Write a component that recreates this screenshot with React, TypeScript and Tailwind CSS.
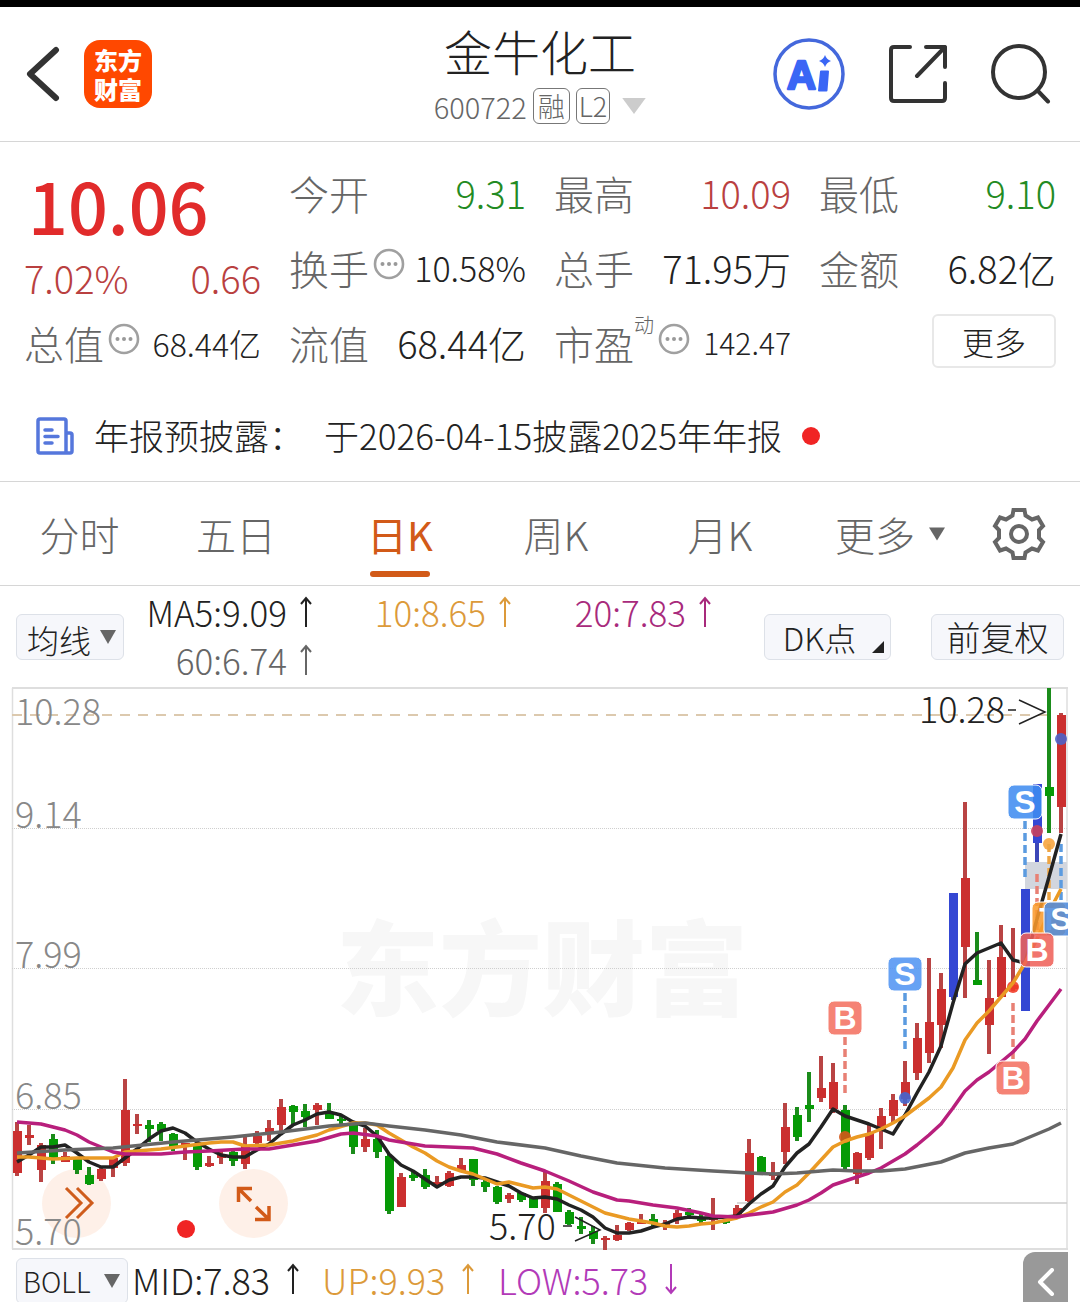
import type { ReactNode } from "react";

type Candle = [number, number, number, number, string];

// high, body top, body bottom, low, direction (r = up, g = down, b = signal)
const candles: Candle[] = [
  [1122, 1131, 1173, 1176, "r"], [1125, 1135, 1138, 1145, "r"], [1143, 1145, 1170, 1182, "r"], [1134, 1139, 1160, 1164, "g"],
  [1152, 1156, 1162, 1162, "r"], [1158, 1159, 1170, 1174, "g"], [1167, 1175, 1184, 1185, "g"], [1168, 1169, 1179, 1181, "r"],
  [1157, 1158, 1168, 1177, "r"], [1079, 1110, 1163, 1166, "r"], [1114, 1124, 1126, 1134, "r"], [1120, 1125, 1129, 1142, "g"],
  [1122, 1124, 1131, 1141, "g"], [1133, 1134, 1147, 1151, "g"], [1143, 1143, 1146, 1160, "r"], [1144, 1146, 1167, 1170, "g"],
  [1156, 1163, 1166, 1167, "r"], [1152, 1154, 1158, 1164, "r"], [1150, 1152, 1161, 1166, "g"], [1137, 1145, 1164, 1169, "r"],
  [1131, 1136, 1143, 1145, "r"], [1120, 1128, 1133, 1141, "r"], [1099, 1107, 1125, 1131, "r"], [1105, 1106, 1112, 1124, "g"],
  [1104, 1111, 1117, 1127, "g"], [1103, 1105, 1110, 1125, "r"], [1103, 1113, 1119, 1119, "g"], [1115, 1119, 1121, 1124, "g"],
  [1122, 1123, 1147, 1154, "g"], [1128, 1139, 1147, 1152, "r"], [1130, 1139, 1152, 1158, "g"], [1154, 1156, 1211, 1214, "g"],
  [1173, 1177, 1207, 1207, "r"], [1172, 1175, 1178, 1181, "g"], [1169, 1175, 1187, 1189, "g"], [1176, 1182, 1185, 1187, "r"],
  [1171, 1173, 1186, 1187, "r"], [1158, 1165, 1171, 1171, "r"], [1159, 1159, 1180, 1186, "g"], [1180, 1182, 1187, 1192, "g"],
  [1186, 1187, 1202, 1204, "g"], [1193, 1195, 1199, 1203, "r"], [1192, 1193, 1200, 1202, "g"], [1197, 1198, 1208, 1208, "g"],
  [1171, 1181, 1208, 1213, "r"], [1182, 1184, 1212, 1212, "g"], [1210, 1212, 1224, 1225, "g"], [1217, 1226, 1229, 1234, "g"],
  [1226, 1231, 1239, 1244, "g"], [1236, 1238, 1240, 1250, "r"], [1225, 1235, 1240, 1241, "r"], [1222, 1223, 1230, 1231, "r"],
  [1214, 1221, 1224, 1224, "r"], [1214, 1219, 1224, 1226, "g"], [1220, 1223, 1226, 1230, "r"], [1210, 1213, 1220, 1224, "r"],
  [1208, 1212, 1215, 1218, "g"], [1214, 1218, 1221, 1223, "g"], [1198, 1217, 1220, 1230, "r"], [1219, 1220, 1223, 1224, "g"],
  [1205, 1208, 1217, 1217, "r"], [1139, 1153, 1201, 1202, "r"], [1156, 1157, 1174, 1175, "g"], [1162, 1174, 1176, 1180, "r"],
  [1103, 1127, 1152, 1164, "r"], [1107, 1115, 1137, 1141, "g"], [1072, 1105, 1109, 1122, "g"], [1056, 1088, 1098, 1102, "r"],
  [1063, 1082, 1109, 1113, "r"], [1105, 1110, 1167, 1169, "g"], [1152, 1153, 1174, 1184, "r"], [1125, 1133, 1158, 1160, "r"],
  [1108, 1116, 1130, 1149, "r"], [1094, 1100, 1116, 1123, "r"], [1061, 1082, 1099, 1106, "r"], [1023, 1038, 1073, 1080, "r"],
  [958, 1022, 1053, 1063, "r"], [973, 989, 1025, 1048, "r"], [893, 893, 997, 1000, "b"], [802, 878, 947, 998, "r"],
  [932, 980, 985, 985, "g"], [960, 998, 1025, 1054, "r"], [925, 957, 997, 997, "r"], [928, 985, 989, 991, "r"],
  [889, 889, 1011, 1011, "b"], [784, 784, 843, 862, "b"], [688, 787, 796, 833, "g"], [713, 715, 807, 833, "r"],
];

const bodyColor: Record<string, string> = { r: "#cb2f2f", g: "#069a06", b: "#3447d3" };
const wickColor: Record<string, string> = { r: "#b94444", g: "#1b8c1b", b: "#3c47b8" };

// [candle index, y]
const ma5 = [
  1162, 1155, 1147, 1147, 1145, 1153, 1162, 1167, 1167, 1158, 1149, 1139, 1131, 1128, 1133, 1142, 1149, 1155, 1157, 1157, 1150, 1144,
  1134, 1125, 1120, 1114, 1112, 1115, 1122, 1126, 1136, 1154, 1165, 1171, 1179, 1187, 1180, 1177, 1177, 1178, 1182, 1186, 1193, 1198,
  1197, 1199, 1205, 1210, 1217, 1228, 1233, 1233, 1231, 1227, 1224, 1219, 1217, 1218, 1218, 1217, 1216, 1204, 1194, 1186, 1167, 1153,
  1144, 1127, 1109, 1116, 1120, 1124, 1129, 1134, 1115, 1093, 1072, 1046, 1003, 964, 953, 948, 943, 960, 963, 919, 877, 834,
].map((y, i) => [i, y]);

const ma10 = [
  [0, 1157], [1, 1157], [3, 1159], [5, 1158], [8, 1158], [9, 1152], [12, 1149], [14, 1146], [16, 1143], [17, 1142], [18, 1142],
  [19, 1146], [21, 1145], [23, 1141], [25, 1135], [26, 1130], [28, 1123], [29, 1123], [30, 1125], [31, 1133], [32, 1140], [33, 1147],
  [34, 1153], [35, 1161], [36, 1167], [37, 1171], [38, 1174], [39, 1179], [40, 1184], [41, 1182], [42, 1185], [43, 1188], [44, 1187],
  [45, 1189], [46, 1195], [47, 1201], [48, 1207], [49, 1213], [50, 1216], [51, 1219], [52, 1221], [53, 1223], [54, 1226], [55, 1227],
  [56, 1226], [57, 1224], [58, 1223], [60, 1218], [61, 1213], [62, 1207], [63, 1202], [64, 1192], [65, 1185], [66, 1173], [67, 1160],
  [68, 1147], [69, 1141], [70, 1137], [71, 1134], [72, 1129], [73, 1123], [74, 1116], [75, 1107], [76, 1098], [77, 1087], [78, 1068],
  [79, 1040], [80, 1023], [81, 1011], [82, 997], [83, 983], [84, 963], [85, 939], [86, 912], [87, 889],
];

const ma20 = [
  [0, 1122], [1, 1123], [2, 1124], [3, 1127], [4, 1130], [5, 1135], [6, 1142], [7, 1147], [8, 1152], [9, 1154], [12, 1154], [14, 1152],
  [16, 1151], [19, 1149], [21, 1149], [23, 1145], [25, 1141], [27, 1134], [28, 1133], [30, 1136], [31, 1140], [32, 1142], [34, 1146],
  [38, 1148], [40, 1154], [42, 1163], [43, 1167], [44, 1171], [46, 1181], [48, 1192], [50, 1200], [51, 1201], [53, 1205], [55, 1208],
  [57, 1213], [58, 1216], [60, 1217], [61, 1215], [63, 1212], [65, 1205], [66, 1200], [67, 1193], [68, 1185], [70, 1177], [71, 1173],
  [72, 1168], [74, 1154], [75, 1145], [76, 1135], [77, 1124], [78, 1108], [79, 1091], [80, 1080], [81, 1072], [82, 1062], [83, 1052],
  [84, 1039], [85, 1021], [86, 1005], [87, 989],
];

const ma60 = [
  [0, 1153], [4, 1150], [8, 1148], [13, 1142], [18, 1137], [22, 1132], [26, 1126], [28, 1124], [29, 1123], [31, 1126], [34, 1130],
  [37, 1135], [40, 1142], [44, 1148], [47, 1156], [50, 1163], [54, 1168], [58, 1171], [61, 1173], [63, 1174], [65, 1173], [68, 1170],
  [70, 1171], [72, 1171], [74, 1169], [77, 1162], [79, 1153], [81, 1148], [83, 1144], [84, 1139], [86, 1129], [87, 1123],
];

const candleX = (i: number) => 17 + i * 12;
const toPoints = (line: number[][]) => line.map(([i, y]) => `${candleX(i)},${y}`).join(" ");

const priceLabels = [
  { text: "10.28", y: 725 },
  { text: "9.14", y: 828 },
  { text: "7.99", y: 968 },
  { text: "6.85", y: 1109 },
  { text: "5.70", y: 1245 },
];

const markers = [
  { x: 845, y: 1018, text: "B", color: "#f47060" },
  { x: 905, y: 974, text: "S", color: "#5094f2" },
  { x: 1013, y: 1078, text: "B", color: "#f47060" },
  { x: 1025, y: 802, text: "S", color: "#3f8cf0" },
  { x: 1049, y: 919, text: "T", color: "#f99a2c" },
  { x: 1061, y: 919, text: "S", color: "#4f8bdc" },
  { x: 1037, y: 950, text: "B", color: "#ef6058" },
];

const leaders = [
  { x: 845, from: 1037, to: 1093, color: "#e88074" },
  { x: 905, from: 993, to: 1049, color: "#5b9be0" },
  { x: 1013, from: 1003, to: 1060, color: "#e88074" },
  { x: 1025, from: 821, to: 877, color: "#5b9be0" },
  { x: 1037, from: 874, to: 934, color: "#e88074" },
  { x: 1049, from: 844, to: 902, color: "#eea544" },
  { x: 1061, from: 844, to: 902, color: "#5b9be0" },
];

const dots = [
  { x: 845, y: 1137, color: "#d4581a" },
  { x: 905, y: 1098, color: "#4466cf" },
  { x: 1013, y: 987, color: "#f23c28" },
  { x: 1037, y: 831, color: "#c9405c" },
  { x: 1049, y: 844, color: "#f7a540" },
  { x: 1061, y: 739, color: "#4d63c9" },
];

function InfoIcon() {
  return (
    <svg viewBox="0 0 32 32" className="mb-2 ml-1 size-8 shrink-0" aria-hidden="true">
      <circle cx="16" cy="16" r="14" fill="none" stroke="#a0a0a0" strokeWidth="2.6" />
      <circle cx="9.5" cy="16" r="2" fill="#999" />
      <circle cx="16" cy="16" r="2" fill="#999" />
      <circle cx="22.5" cy="16" r="2" fill="#999" />
    </svg>
  );
}

function Arrow({ down = false }: { down?: boolean }) {
  return (
    <svg viewBox="0 0 14 32" className="h-8 w-3.5" fill="none" stroke="currentColor" strokeWidth="2" aria-hidden="true">
      {down ? <path d="M7 1v29M2 24l5 6 5-6" /> : <path d="M7 31V2M2 8l5-6 5 6" />}
    </svg>
  );
}

function Quote({ label, info, sup, value, valueClass }: { label: string; info?: boolean; sup?: string; value: string; valueClass: string }) {
  return (
    <div className="flex items-center justify-between whitespace-nowrap">
      <dt className="flex items-center text-[40px] text-[#666]">
        {label}
        {sup && <sup className="top-0 self-start text-xl leading-6">{sup}</sup>}
        {info && <InfoIcon />}
      </dt>
      <dd className={valueClass}>{value}</dd>
    </div>
  );
}

function Average({ text, className, down }: { text: string; className: string; down?: boolean }) {
  return (
    <div className={`flex items-center whitespace-nowrap ${className}`}>
      {text}
      <Arrow down={down} />
    </div>
  );
}

function Picker({ label, value, options, className }: { label: string; value: string; options: string[]; className: string }) {
  return (
    <div className={`relative shrink-0 ${className}`}>
      <select
        aria-label={label}
        defaultValue={value}
        className="h-[46px] w-full appearance-none rounded-md border border-[#dde1e8] bg-[#f6f7fb] text-[#222] outline-none"
      >
        {options.map((o) => (
          <option key={o}>{o}</option>
        ))}
      </select>
      <svg viewBox="0 0 16 14" className="pointer-events-none absolute right-2 top-4 h-3.5 w-4" aria-hidden="true">
        <path d="M0 0h16L8 14z" fill="#666" />
      </svg>
    </div>
  );
}

function Tab({ active, children }: { active?: boolean; children: ReactNode }) {
  return (
    <button
      role="tab"
      aria-selected={!!active}
      className={`relative flex h-full items-center justify-center gap-3.5 whitespace-nowrap text-[40px] ${active ? "font-normal text-[#d25a18]" : "text-[#666]"}`}
    >
      {children}
      {active && <span className="absolute bottom-2 h-1.5 w-[60px] rounded-full bg-[#d25a18]" />}
    </button>
  );
}

function KLineChart() {
  return (
    <svg viewBox="0 686 1080 564" className="pointer-events-none block w-full" role="img" aria-label="日K">
      <text x="542" y="1008" textAnchor="middle" fontSize="103" fontWeight="900" fill="#f7f7f7">东方财富</text>
      <path d="M12 688H1068M12 1249H1068" stroke="#dedede" strokeWidth="2" />
      <path d="M12.5 688V1249M1067 688V1249" stroke="#dedede" strokeWidth="1.5" />
      <path d="M12 828.5H1067M12 968.5H1067M12 1109.5H1067" stroke="#cfcfcf" strokeDasharray="1 1" />
      <path d="M12 715H1047" stroke="#dcc9ae" strokeWidth="2" strokeDasharray="10 8" />
      <path d="M737 1203H1067" stroke="#ccc" strokeWidth="1.5" />
      <rect x="1025" y="862" width="42" height="27" fill="#d2d6de" />

      <g fontSize="36" fill="#888">
        {priceLabels.map((p) => (
          <text key={p.text} x="15" y={p.y}>{p.text}</text>
        ))}
      </g>

      {candles.map(([high, top, bottom, low, dir], i) => (
        <g key={i}>
          <rect x={candleX(i) - 2} y={high} width="4" height={Math.max(low - high, 1)} fill={wickColor[dir]} />
          <rect x={candleX(i) - 4} y={top} width="9" height={Math.max(bottom - top, 2)} fill={bodyColor[dir]} />
        </g>
      ))}

      {dots.map((d) => (
        <circle key={d.x} cx={d.x} cy={d.y} r="6" fill={d.color} fillOpacity="0.9" />
      ))}
      {leaders.map((l) => (
        <path key={l.x} d={`M${l.x} ${l.from}V${l.to}`} stroke={l.color} strokeWidth="3.5" strokeDasharray="8 4" />
      ))}

      <g fill="none" strokeWidth="3.5" strokeLinejoin="round">
        <polyline points={toPoints(ma5)} stroke="#222" />
        <polyline points={toPoints(ma10)} stroke="#ea9a24" />
        <polyline points={toPoints(ma20)} stroke="#b81f7c" />
        <polyline points={toPoints(ma60)} stroke="#666" />
      </g>

      <clipPath id="plot">
        <rect x="0" y="686" width="1068" height="564" />
      </clipPath>
      <g clipPath="url(#plot)">
        {markers.map((m) => (
          <g key={m.x}>
            <rect x={m.x - 17} y={m.y - 17} width="34" height="34" rx="6" fill={m.color} fillOpacity="0.87" stroke="#fff" />
            <text x={m.x} y={m.y + 11} textAnchor="middle" fontSize="32" fontWeight="700" fill="#fff" className="font-['Liberation_Sans',sans-serif]">
              {m.text}
            </text>
          </g>
        ))}
      </g>

      <g fontSize="36" fill="#222">
        <text x="919" y="723">10.28</text>
        <text x="489" y="1240">5.70</text>
      </g>
      <path d="M1008 710H1016M1019 700L1045 712L1019 724M563 1226H572M575 1217L600 1230L575 1241" fill="none" stroke="#222" strokeWidth="1.5" />
    </svg>
  );
}

export default function App() {
  return (
    <main
      lang="zh-CN"
      className="w-full overflow-hidden border-t-[7px] border-black bg-white font-['Noto_Sans_CJK_SC','Noto_Sans',sans-serif] font-light text-[#222]"
    >
      {/* title bar */}
      <header className="grid h-[135px] grid-cols-[1fr_auto_1fr] items-center border-b border-[#d6d6d6]">
        <div className="flex items-center gap-6 pl-6">
          <button aria-label="返回">
            <svg viewBox="0 0 36 56" className="h-14 w-9" fill="none" stroke="#333" strokeWidth="6" strokeLinecap="round" strokeLinejoin="round">
              <path d="M32 4L6 28L32 52" />
            </svg>
          </button>
          <a href="#home" className="flex size-[68px] flex-col items-center justify-center rounded-2xl bg-[#ff4800] text-2xl font-black leading-[29px] text-white">
            <span>东方</span>
            <span>财富</span>
          </a>
        </div>

        <div className="flex flex-col items-center gap-3">
          <h1 className="text-5xl font-light leading-[52px]">金牛化工</h1>
          <button className="flex items-center gap-1.5 text-[29px] leading-9 text-[#666]">
            600722
            <span className="flex h-9 items-center rounded-md border border-[#777] px-1 text-[27px]">融</span>
            <span className="flex h-9 items-center rounded-md border border-[#777] px-0.5 text-[27px]">L2</span>
            <svg viewBox="0 0 22 15" className="ml-1.5 h-4 w-6" aria-hidden="true">
              <path d="M0 0h22L11 15z" fill="#ccc" />
            </svg>
          </button>
        </div>

        <div className="flex items-center justify-end gap-11 pr-[29px]">
          <button aria-label="AI">
            <svg viewBox="0 0 72 72" className="size-[72px]">
              <circle cx="36" cy="36" r="34" fill="none" stroke="#4468dc" strokeWidth="3.5" />
              <text x="14" y="51" fontSize="40" fontWeight="900" fill="#3a66f5" stroke="#3a66f5" strokeWidth="2.5" strokeLinejoin="round" className="font-['Liberation_Sans',sans-serif]">A</text>
              <path d="M48 33.500H55L53.500 52.500H46Z" fill="#3a66f5" stroke="#3a66f5" strokeWidth="2" strokeLinejoin="round" />
              <path d="M52 17Q53.500 21.500 58 23Q53.500 24.500 52 29Q50.500 24.500 46 23Q50.500 21.500 52 17Z" fill="#3a66f5" />
            </svg>
          </button>
          <button aria-label="分享">
            <svg viewBox="0 0 58 58" className="size-[58px]" fill="none" stroke="#333" strokeWidth="4" strokeLinecap="round" strokeLinejoin="round">
              <path d="M21 2H5Q2 2 2 5V53Q2 56 5 56H53Q56 56 56 53V38" />
              <path d="M37 2H56V22M56 2L28 31" />
            </svg>
          </button>
          <button aria-label="搜索">
            <svg viewBox="0 0 60 60" className="size-[60px]" fill="none" stroke="#333" strokeWidth="4" strokeLinecap="round">
              <circle cx="28" cy="28" r="26" />
              <path d="M46.500 46.500L57 57.500" />
            </svg>
          </button>
        </div>
      </header>

      {/* quote */}
      <section className="border-b border-[#d6d6d6]">
        <dl className="grid auto-rows-[75px] grid-cols-4 gap-x-7 px-6 pt-[13px]">
          <div className="row-span-2 flex flex-col justify-end text-[#b94040]">
            <div className="flex h-[88px] items-center pl-1 text-[70px] font-medium leading-none text-[#e12b2b]">10.06</div>
            <div className="flex h-14 items-center justify-between text-[38px]">
              <span>7.02%</span>
              <span>0.66</span>
            </div>
          </div>
          <Quote label="今开" value="9.31" valueClass="text-[38px] text-[#238b23]" />
          <Quote label="最高" value="10.09" valueClass="text-[38px] text-[#b94040]" />
          <Quote label="最低" value="9.10" valueClass="text-[38px] text-[#238b23]" />
          <Quote label="换手" info value="10.58%" valueClass="text-[34px]" />
          <Quote label="总手" value="71.95万" valueClass="text-[38px]" />
          <Quote label="金额" value="6.82亿" valueClass="text-[38px]" />
          <Quote label="总值" info value="68.44亿" valueClass="text-[32px]" />
          <Quote label="流值" value="68.44亿" valueClass="text-[38px]" />
          <Quote label="市盈" sup="动" info value="142.47" valueClass="text-[30px]" />
          <div className="flex items-center justify-end">
            <button className="mb-1 h-[54px] w-[124px] rounded-md border-2 border-[#e8e8e8] text-[32px] leading-none">更多</button>
          </div>
        </dl>

        <a href="#notice" className="flex h-[101px] items-center gap-5 whitespace-nowrap pl-9 pt-2.5 text-[35px]">
          <svg viewBox="0 0 38 38" className="size-[38px]" fill="none" stroke="#5577dc" strokeWidth="3.5" strokeLinecap="round" strokeLinejoin="round" aria-hidden="true">
            <path d="M30 36H4Q2 36 2 34V4Q2 2 4 2H28Q30 2 30 4V36H34Q36 36 36 34V18Q36 16 34 16H30" />
            <path d="M9 13H16M9 19.500H22M9 26H16" />
          </svg>
          <span>年报预披露：</span>
          <span>于2026-04-15披露2025年年报</span>
          <span className="size-[18px] rounded-full bg-[#f02424]" />
        </a>
      </section>

      {/* period tabs */}
      <nav role="tablist" className="grid h-[104px] grid-cols-[159fr_154fr_174fr_138fr_190fr_150fr_115fr] border-b border-[#d6d6d6]">
        <Tab>分时</Tab>
        <Tab>五日</Tab>
        <Tab active>日K</Tab>
        <Tab>周K</Tab>
        <Tab>月K</Tab>
        <Tab>
          更多
          <svg viewBox="0 0 16 13" className="h-3.5 w-4" aria-hidden="true">
            <path d="M0 0h16L8 13z" fill="#666" />
          </svg>
        </Tab>
        <button aria-label="设置" className="flex items-center justify-center pr-2">
          <svg viewBox="-28 -28 56 56" className="size-14" fill="none" stroke="#666" strokeWidth="4">
            <path d="M-5.500 -24H5.500L6.500 -18.500L13 -14.500L19 -16.500L24 -8L20 -4V4L24 8L19 16.500L13 14.500L6.500 18.500L5.500 24H-5.500L-6.500 18.500L-13 14.500L-19 16.500L-24 8L-20 4V-4L-24 -8L-19 -16.500L-13 -14.500L-6.500 -18.500Z" />
            <circle r="8" />
          </svg>
        </button>
      </nav>

      {/* indicator bar */}
      <section className="flex h-[100px] items-start justify-between px-4">
        <div className="flex">
          <Picker label="均线" value="均线" options={["均线", "BOLL"]} className="mt-7 w-[108px] text-[32px] [&>select]:pl-2.5" />
          <div className="grid grid-cols-[189px_199px_200px] justify-items-end pt-0.5 text-[35px] leading-[48px]">
            <Average text="MA5:9.09" className="gap-3 text-[#222]" />
            <Average text="10:8.65" className="gap-3 text-[#dc9a3a]" />
            <Average text="20:7.83" className="gap-3 text-[#a82a7c]" />
            <Average text="60:6.74" className="gap-3 text-[#666]" />
          </div>
        </div>
        <div className="mt-7 flex gap-10">
          <button className="relative h-[46px] w-[127px] rounded-md border border-[#dde1e8] bg-[#f6f7fb] pr-4 text-[32px] leading-none">
            DK点
            <svg viewBox="0 0 12 12" className="absolute bottom-1.5 right-1.5 size-3" aria-hidden="true">
              <path d="M12 0V12H0z" fill="#222" />
            </svg>
          </button>
          <button className="h-[46px] w-[133px] rounded-md border border-[#dde1e8] bg-[#f6f7fb] text-[34px] leading-none">前复权</button>
        </div>
      </section>

      {/* the round buttons sit under the price scale */}
      <section className="relative isolate">
        <KLineChart />
        <button aria-label="展开" className="absolute bottom-3 left-[42px] -z-10 size-[69px] rounded-full bg-[#f26a21]/10">
          <svg viewBox="0 0 69 69" className="size-full" fill="none" stroke="#cf5c1c" strokeWidth="3">
            <path d="M24 19L39 34L24 49M35 19L50 34L35 49" />
          </svg>
        </button>
        <span className="absolute bottom-3 left-[177px] size-[18px] rounded-full bg-[#f02424]" />
        <button aria-label="全屏" className="absolute bottom-3 left-[219px] -z-10 size-[69px] rounded-full bg-[#f26a21]/10">
          <svg viewBox="0 0 69 69" className="size-full" fill="none" stroke="#d25a18" strokeWidth="3.5">
            <path d="M19.500 33V19.500H33M20 20L32 32M50 37V50.500H36M49.500 50L37 38" />
          </svg>
        </button>
      </section>

      {/* lower indicator */}
      <footer className="flex h-[52px] items-start overflow-hidden pl-4 pt-0.5">
        <Picker label="指标" value="BOLL" options={["BOLL", "均线"]} className="mt-1.5 w-28 text-[28px] [&>select]:pl-1.5" />
        <div className="grid grid-cols-[190px_176px_auto] pl-1 pt-1.5 text-4xl leading-[42px]">
          <Average text="MID:7.83" className="gap-4 text-[#222]" />
          <Average text="UP:9.93" className="gap-4 text-[#dc9a3a]" />
          <Average text="LOW:5.73" className="gap-4 text-[#b23ab8]" down />
        </div>
        <button aria-label="收起" className="ml-auto mr-3 flex h-16 w-[45px] items-start justify-center rounded-tl-xl bg-[#999] pt-4">
          <svg viewBox="0 0 18 28" className="h-7 w-[18px]" fill="none" stroke="#fff" strokeWidth="4" strokeLinecap="round" strokeLinejoin="round">
            <path d="M15 2L3 14L15 26" />
          </svg>
        </button>
      </footer>
    </main>
  );
}
